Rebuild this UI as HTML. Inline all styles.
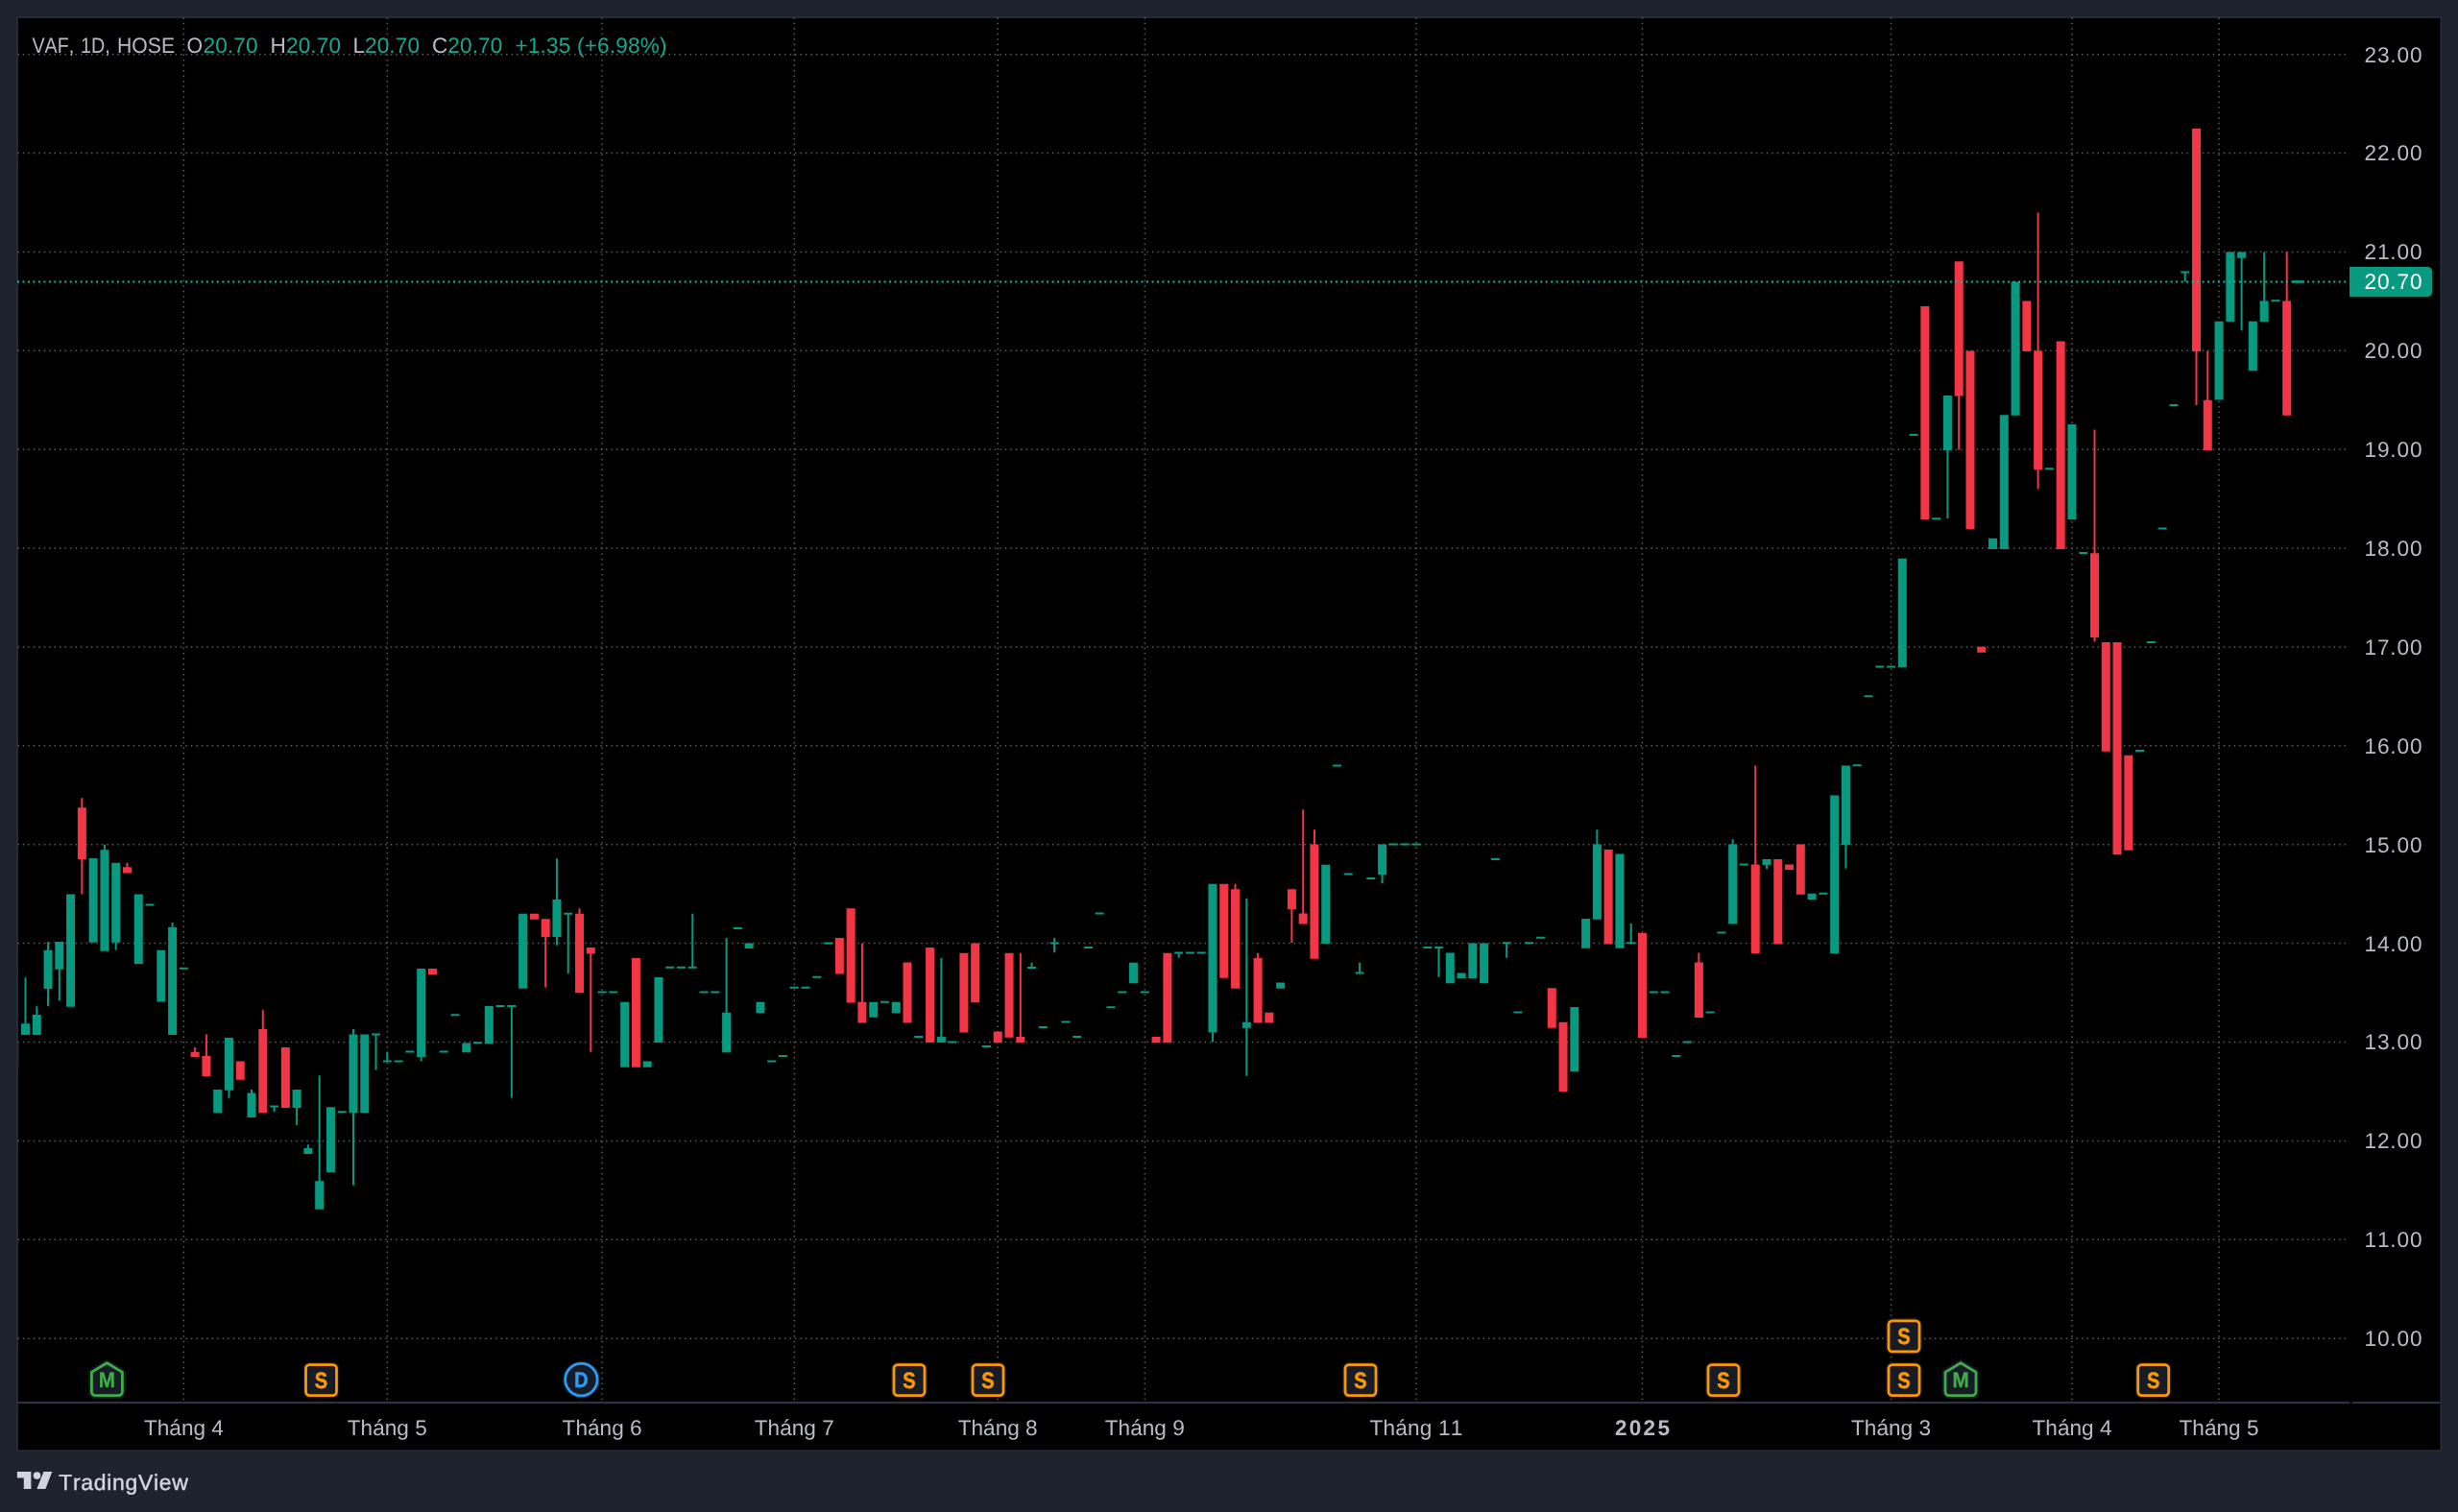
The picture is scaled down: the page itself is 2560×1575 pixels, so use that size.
<!DOCTYPE html>
<html><head><meta charset="utf-8"><title>VAF</title>
<style>
html,body{margin:0;padding:0;background:#1e222d;}
body{width:2560px;height:1575px;overflow:hidden;font-family:"Liberation Sans",sans-serif;}
svg{display:block;will-change:transform;}
text{font-kerning:none;text-rendering:geometricPrecision;}
</style></head><body>
<svg width="2560" height="1575" viewBox="0 0 2560 1575">
<defs><clipPath id="cc"><rect x="19" y="19" width="2428" height="1441"/></clipPath></defs>
<rect x="17" y="17" width="2526" height="1495" rx="3" fill="#262a36"/>
<rect x="19" y="19" width="2522.3" height="1491.3" fill="#000"/>
<g stroke="#5c5d62" stroke-width="1.5" stroke-dasharray="1.5 3.97" fill="none">
<path d="M18.35 1394.14H2444.5"/>
<path d="M18.35 1291.26H2444.5"/>
<path d="M18.35 1188.38H2444.5"/>
<path d="M18.35 1085.50H2444.5"/>
<path d="M18.35 982.62H2444.5"/>
<path d="M18.35 879.74H2444.5"/>
<path d="M18.35 776.86H2444.5"/>
<path d="M18.35 673.98H2444.5"/>
<path d="M18.35 571.10H2444.5"/>
<path d="M18.35 468.22H2444.5"/>
<path d="M18.35 365.34H2444.5"/>
<path d="M18.35 262.46H2444.5"/>
<path d="M18.35 159.58H2444.5"/>
<path d="M18.35 56.70H2444.5"/>
<path d="M191.36 18.25V1460"/>
<path d="M403.33 18.25V1460"/>
<path d="M627.08 18.25V1460"/>
<path d="M827.27 18.25V1460"/>
<path d="M1039.24 18.25V1460"/>
<path d="M1192.32 18.25V1460"/>
<path d="M1474.95 18.25V1460"/>
<path d="M1710.47 18.25V1460"/>
<path d="M1969.54 18.25V1460"/>
<path d="M2157.96 18.25V1460"/>
<path d="M2311.04 18.25V1460"/>
</g>
<g clip-path="url(#cc)">
<path fill="#089981" d="M10.22 1085.5h9v25.5h-9z M25.5 1018.15h2v59.88h-2z M22 1066.21h9v11.81h-9z M37.28 1048.29h2v29.74h-2z M33.78 1057.05h9v20.98h-9z M49.05 981.08h2v66.8h-2z M45.55 989.84h9v40.12h-9z M60.83 981.08h2v61.51h-2z M57.33 981.08h9v28.72h-9z M69.1 931.59h9v117.11h-9z M92.66 894.11h9v87.58h-9z M107.93 879.86h2v110.79h-2z M104.43 885.15h9v105.5h-9z M119.71 898.8h2v91.04h-2z M116.21 898.8h9v82.89h-9z M139.76 931.59h9v72.51h-9z M151.54 941.38h9v2h-9z M163.31 989.84h9v53.56h-9z M178.59 960.92h2v117.11h-2z M175.09 966.01h9v112.02h-9z M186.86 1007.78h9v2h-9z M222.19 1135.03h9v24.24h-9z M237.47 1081.06h2v62.73h-2z M233.97 1081.06h9v54.58h-9z M261.02 1135.03h2v28.92h-2z M257.52 1138.49h9v25.46h-9z M281.07 1151.55h9v2h-9z M284.57 1152.55h2v5.7h-2z M308.12 1135.03h2v37.07h-2z M304.62 1135.03h9v18.94h-9z M319.9 1192.26h2v9.78h-2z M316.4 1195.93h9v6.11h-9z M331.68 1120.37h2v139.31h-2z M328.18 1230.35h9v29.33h-9z M339.95 1153.16h9v67.82h-9z M351.73 1157.25h9v2h-9z M367 1071.89h2v162.93h-2z M363.5 1077.39h9v81.87h-9z M375.28 1077.39h9v81.87h-9z M387.06 1076.39h9v2h-9z M390.56 1077.39h2v37.47h-2z M398.83 1104.5h9v2h-9z M402.33 1095.72h2v9.78h-2z M410.61 1104.5h9v2h-9z M422.38 1094.52h9v2h-9z M437.66 1008.96h2v96.54h-2z M434.16 1008.96h9v92.06h-9z M457.71 1094.52h9v2h-9z M469.49 1056.23h9v2h-9z M481.26 1086.56h9v9.78h-9z M493.04 1085.35h9v2h-9z M504.82 1048.07h9v39.1h-9z M516.59 1046.98h9v2h-9z M528.37 1046.98h9v2h-9z M531.87 1047.98h2v95.52h-2z M540.14 951.65h9v78h-9z M578.97 894.22h2v90.63h-2z M575.47 936.99h9v38.9h-9z M587.25 950.65h9v2h-9z M590.75 951.65h2v62.53h-2z M622.58 1032.52h9v2h-9z M634.35 1032.52h9v2h-9z M646.13 1043.71h9v68.02h-9z M669.68 1105.62h9v6.11h-9z M681.46 1018.04h9v68.02h-9z M693.23 1006.86h9v2h-9z M705.01 1006.86h9v2h-9z M716.78 1006.86h9v2h-9z M720.28 951.65h2v56.21h-2z M728.56 1032.52h9v2h-9z M740.34 1032.52h9v2h-9z M755.61 977.11h2v119.14h-2z M752.11 1054.7h9v41.55h-9z M763.89 965.92h9v2h-9z M775.66 982.61h9v5.3h-9z M787.44 1043.71h9v11.61h-9z M799.22 1104.62h9v2h-9z M810.99 1099.12h9v2h-9z M822.77 1027.84h9v2h-9z M834.54 1027.84h9v2h-9z M846.32 1016.84h9v2h-9z M858.1 981.61h9v2h-9z M905.2 1043.71h9v16.09h-9z M916.98 1042.71h9v2h-9z M928.75 1043.71h9v11.61h-9z M952.3 1078.96h9v2h-9z M979.36 998.09h2v87.98h-2z M975.86 1079.96h9v6.11h-9z M987.63 1084.46h9v2h-9z M1022.96 1089.08h9v2h-9z M1070.06 1007h9v2h-9z M1073.56 1002.71h2v5.3h-2z M1081.84 1068.92h9v2h-9z M1093.62 981.55h9v2h-9z M1097.12 977.05h2v15.27h-2z M1105.39 1063.42h9v2h-9z M1117.17 1078.9h9v2h-9z M1128.94 986.03h9v2h-9z M1140.72 950.59h9v2h-9z M1152.5 1048.14h9v2h-9z M1164.27 1032.46h9v2h-9z M1176.05 1002.71h9v21.59h-9z M1187.82 1032.46h9v2h-9z M1223.15 991.53h9v2h-9z M1226.65 992.53h2v5.09h-2z M1234.93 991.53h9v2h-9z M1246.7 991.53h9v2h-9z M1261.98 920.63h2v164.77h-2z M1258.48 920.63h9v154.79h-9z M1297.31 936.11h2v184.52h-2z M1293.81 1064.83h9v5.91h-9z M1329.14 1023.48h9v6.31h-9z M1376.24 900.67h9v82.28h-9z M1388.02 796.5h9v2h-9z M1399.79 909.45h9v2h-9z M1411.57 1012.5h9v2h-9z M1415.07 1002.71h2v10.79h-2z M1423.34 913.93h9v2h-9z M1438.62 879.49h2v40.73h-2z M1435.12 879.49h9v31.57h-9z M1446.9 878.49h9v2h-9z M1458.67 878.49h9v2h-9z M1470.45 878.49h9v2h-9z M1482.22 986.05h9v2h-9z M1494 986.05h9v2h-9z M1497.5 987.05h2v30.75h-2z M1505.78 992.55h9v31.77h-9z M1517.55 1013.52h9v5.5h-9z M1529.33 982.57h9v36.46h-9z M1541.1 982.57h9v41.75h-9z M1552.88 893.99h9v2h-9z M1564.66 981.36h9v2h-9z M1568.16 982.36h2v15.48h-2z M1576.43 1053.46h9v2h-9z M1588.21 981.36h9v2h-9z M1599.98 975.86h9v2h-9z M1635.31 1048.96h9v67.41h-9z M1647.09 957.11h9v30.75h-9z M1662.36 864.24h2v93.48h-2z M1658.86 879.51h9v78.21h-9z M1682.42 889.49h9v98.37h-9z M1694.19 981.36h9v2h-9z M1697.69 961.79h2v20.57h-2z M1717.74 1032.48h9v2h-9z M1729.52 1032.48h9v2h-9z M1741.3 1098.88h9v2h-9z M1753.07 1084.42h9v2h-9z M1776.62 1053.46h9v2h-9z M1788.4 970.57h9v2h-9z M1803.68 874.22h2v88.19h-2z M1800.18 879.51h9v82.89h-9z M1811.95 899.49h9v2h-9z M1839 894.99h2v9.98h-2z M1835.5 894.99h9v6.11h-9z M1882.61 930.84h9v6.11h-9z M1894.38 929.63h9v2h-9z M1906.16 828.59h9v164.77h-9z M1921.44 797.43h2v107.33h-2z M1917.94 797.43h9v82.89h-9z M1929.71 796.23h9v2h-9z M1941.49 724.34h9v2h-9z M1953.26 693.38h9v2h-9z M1965.04 693.38h9v2h-9z M1976.82 581.63h9v113.36h-9z M1988.59 451.91h9v2h-9z M2012.14 539.29h9v2h-9z M2027.42 411.98h2v128.31h-2z M2023.92 411.98h9v57.03h-9z M2071.02 560.65h9v11.41h-9z M2082.8 432.14h9v139.92h-9z M2094.58 293.5h9v139.25h-9z M2129.9 487.35h9v2h-9z M2153.46 442.12h9v98.98h-9z M2165.23 574.93h9v2h-9z M2224.11 780.96h9v2h-9z M2235.89 667.92h9v2h-9z M2247.66 549.47h9v2h-9z M2259.44 420.96h9v2h-9z M2271.22 282.52h9v2h-9z M2274.72 283.52h2v9.98h-2z M2306.54 334.64h9v81.87h-9z M2318.32 262.55h9v72.51h-9z M2333.6 262.55h2v81.67h-2z M2330.1 262.55h9v6.11h-9z M2341.87 334.64h9v51.73h-9z M2357.15 262.55h2v72.51h-2z M2353.65 313.46h9v21.59h-9z M2365.42 312.26h9v2h-9z M2387.28 292.5h12.5v2h-12.5z"/>
<path fill="#f23645" d="M84.38 831.18h2v100.41h-2z M80.88 841.16h9v53.77h-9z M131.48 898.8h2v10.79h-2z M127.98 903.28h9v6.31h-9z M202.14 1091.04h2v9.98h-2z M198.64 1095.72h9v5.3h-9z M213.92 1077.39h2v43.58h-2z M210.42 1100h9v20.98h-9z M245.74 1105.5h9v19.35h-9z M272.8 1052.14h2v107.13h-2z M269.3 1071.89h9v87.37h-9z M292.85 1091.04h9v62.93h-9z M445.94 1008.96h9v6.31h-9z M551.92 951.65h9v6.11h-9z M567.2 957.15h2v71.69h-2z M563.7 957.15h9v18.74h-9z M602.52 946.15h2v88.19h-2z M599.02 951.65h9v82.69h-9z M614.3 987.09h2v108.55h-2z M610.8 987.09h9v6.31h-9z M657.9 998.09h9v113.65h-9z M869.87 977.11h9v37.27h-9z M881.65 946.15h9v98.37h-9z M896.92 982.61h2v82.89h-2z M893.42 1043.71h9v21.79h-9z M940.53 1002.57h9v62.93h-9z M964.08 987.09h9v98.98h-9z M999.41 992.73h9v82.69h-9z M1011.18 982.55h9v61.71h-9z M1034.74 1074.6h9v11.61h-9z M1046.51 992.73h9v87.98h-9z M1061.79 992.73h2v93.48h-2z M1058.29 1080.1h9v6.11h-9z M1199.6 1080.1h9v6.11h-9z M1211.38 992.73h9v93.48h-9z M1270.26 920.63h9v98.17h-9z M1285.53 920.63h2v109.16h-2z M1282.03 926.13h9v103.67h-9z M1309.08 992.73h2v72.71h-2z M1305.58 998.02h9v67.41h-9z M1317.36 1054.64h9v10.79h-9z M1344.41 926.13h2v56.21h-2z M1340.91 926.13h9v20.77h-9z M1356.19 843.24h2v119.35h-2z M1352.69 951.59h9v11h-9z M1367.96 864.22h2v134.62h-2z M1364.46 879.49h9v119.35h-9z M1611.76 1029.21h9v41.55h-9z M1623.54 1064.64h9v72.71h-9z M1670.64 885.01h9v98.57h-9z M1705.97 971.77h9v109.16h-9z M1768.35 992.55h2v67.41h-2z M1764.85 1002.53h9v57.43h-9z M1827.23 797.43h2v195.93h-2z M1823.73 900.49h9v92.87h-9z M1847.28 894.99h9v88.59h-9z M1859.06 900.49h9v5.5h-9z M1870.83 879.51h9v52.14h-9z M2000.37 318.96h9v222.14h-9z M2039.2 272.32h2v196.07h-2z M2035.7 272.32h9v140.26h-9z M2047.47 365.4h9v185.68h-9z M2059.25 673.69h9v6.11h-9z M2106.35 313.46h9v52.55h-9z M2121.63 221.41h2v287.92h-2z M2118.13 365.4h9v123.97h-9z M2141.68 355.42h9v216.64h-9z M2180.51 447.62h2v220.98h-2z M2177.01 576.13h9v87.98h-9z M2188.78 669h9v113.77h-9z M2200.56 669h9v221.3h-9z M2212.34 786.64h9v99.19h-9z M2286.49 134.03h2v287.92h-2z M2282.99 134.03h9v231.98h-9z M2298.27 365.4h2v103.6h-2z M2294.77 416.66h9v52.34h-9z M2380.7 262.55h2v170.2h-2z M2377.2 313.46h9v119.29h-9z"/>
</g>
<path d="M18 293.5H2446" stroke="#0bbfa3" stroke-width="2" stroke-dasharray="2 3.47" fill="none"/>
<rect x="2386.9" y="292.4" width="12.5" height="2.2" fill="#089981"/>
<rect x="19" y="1460" width="2428.2" height="2.2" fill="#2d3140"/>
<rect x="2449.3" y="1460" width="92" height="2.2" fill="#2d3140"/>
<g font-family="Liberation Sans, sans-serif" font-size="22.6" fill="#b9bcc6" text-anchor="start">
<text x="2462.5" y="1402.04" textLength="60" lengthAdjust="spacing">10.00</text>
<text x="2462.5" y="1299.16" textLength="60" lengthAdjust="spacing">11.00</text>
<text x="2462.5" y="1196.28" textLength="60" lengthAdjust="spacing">12.00</text>
<text x="2462.5" y="1093.40" textLength="60" lengthAdjust="spacing">13.00</text>
<text x="2462.5" y="990.52" textLength="60" lengthAdjust="spacing">14.00</text>
<text x="2462.5" y="887.64" textLength="60" lengthAdjust="spacing">15.00</text>
<text x="2462.5" y="784.76" textLength="60" lengthAdjust="spacing">16.00</text>
<text x="2462.5" y="681.88" textLength="60" lengthAdjust="spacing">17.00</text>
<text x="2462.5" y="579.00" textLength="60" lengthAdjust="spacing">18.00</text>
<text x="2462.5" y="476.12" textLength="60" lengthAdjust="spacing">19.00</text>
<text x="2462.5" y="373.24" textLength="60" lengthAdjust="spacing">20.00</text>
<text x="2462.5" y="270.36" textLength="60" lengthAdjust="spacing">21.00</text>
<text x="2462.5" y="167.48" textLength="60" lengthAdjust="spacing">22.00</text>
<text x="2462.5" y="64.60" textLength="60" lengthAdjust="spacing">23.00</text>
</g>
<path d="M2447 278h81.5a4.5 4.5 0 0 1 4.5 4.5v22a4.5 4.5 0 0 1 -4.5 4.5H2447z" fill="#089981"/>
<text x="2462.5" y="301.4" font-family="Liberation Sans, sans-serif" font-size="22.6" fill="#fff" textLength="60" lengthAdjust="spacing">20.70</text>
<g font-family="Liberation Sans, sans-serif" font-size="22.6" fill="#b9bcc6" text-anchor="middle">
<text x="191.4" y="1495.2" textLength="83" lengthAdjust="spacing">Tháng 4</text>
<text x="403.3" y="1495.2" textLength="83" lengthAdjust="spacing">Tháng 5</text>
<text x="627.1" y="1495.2" textLength="83" lengthAdjust="spacing">Tháng 6</text>
<text x="827.3" y="1495.2" textLength="83" lengthAdjust="spacing">Tháng 7</text>
<text x="1039.2" y="1495.2" textLength="83" lengthAdjust="spacing">Tháng 8</text>
<text x="1192.3" y="1495.2" textLength="83" lengthAdjust="spacing">Tháng 9</text>
<text x="1474.9" y="1495.2" textLength="97" lengthAdjust="spacing">Tháng 11</text>
<text x="1710.5" y="1495.2" font-weight="bold" textLength="57" lengthAdjust="spacing">2025</text>
<text x="1969.5" y="1495.2" textLength="83" lengthAdjust="spacing">Tháng 3</text>
<text x="2158.0" y="1495.2" textLength="83" lengthAdjust="spacing">Tháng 4</text>
<text x="2311.0" y="1495.2" textLength="83" lengthAdjust="spacing">Tháng 5</text>
</g>
<g font-family="Liberation Sans, sans-serif" font-size="22.6">
<text x="33.4" y="54.5" fill="#b9bcc6" textLength="43.9" lengthAdjust="spacingAndGlyphs">VAF,</text>
<text x="84.0" y="54.5" fill="#b9bcc6" textLength="30.7" lengthAdjust="spacingAndGlyphs">1D,</text>
<text x="122.0" y="54.5" fill="#b9bcc6" textLength="60" lengthAdjust="spacingAndGlyphs">HOSE</text>
<text x="194.4" y="54.5" fill="#b9bcc6" textLength="16.5" lengthAdjust="spacingAndGlyphs">O</text>
<text x="211.5" y="54.5" fill="#18a791" textLength="57" lengthAdjust="spacing">20.70</text>
<text x="281.5" y="54.5" fill="#b9bcc6" textLength="16" lengthAdjust="spacing">H</text>
<text x="298" y="54.5" fill="#18a791" textLength="57" lengthAdjust="spacing">20.70</text>
<text x="367.5" y="54.5" fill="#b9bcc6" textLength="12" lengthAdjust="spacing">L</text>
<text x="380" y="54.5" fill="#18a791" textLength="57" lengthAdjust="spacing">20.70</text>
<text x="450" y="54.5" fill="#b9bcc6" textLength="16" lengthAdjust="spacing">C</text>
<text x="466.3" y="54.5" fill="#18a791" textLength="57" lengthAdjust="spacing">20.70</text>
<text x="536.5" y="54.5" fill="#18a791" textLength="158" lengthAdjust="spacing">+1.35 (+6.98%)</text>
</g>
<path d="M111.4 1419.8L127.4 1429.3999999999999V1449.6a4 4 0 0 1 -4 4H99.4a4 4 0 0 1 -4 -4V1429.3999999999999z" fill="#171b26" stroke="#131722" stroke-width="7.2" stroke-linejoin="round"/>
<path d="M111.4 1419.8L127.4 1429.3999999999999V1449.6a4 4 0 0 1 -4 4H99.4a4 4 0 0 1 -4 -4V1429.3999999999999z" fill="#171b26" stroke="#3fae46" stroke-width="2.8" stroke-linejoin="round"/>
<text x="111.4" y="1444.6" font-family="Liberation Sans, sans-serif" font-weight="bold" font-size="22.4" fill="#3fae46" stroke="#3fae46" stroke-width="0.3" text-anchor="middle" textLength="17.2" lengthAdjust="spacingAndGlyphs">M</text>
<rect x="315.6" y="1418.6999999999998" width="37.8" height="37.8" rx="6.5" fill="#131722"/>
<rect x="318.5" y="1421.6" width="32" height="32" rx="4" fill="#171b26" stroke="#ff9800" stroke-width="2.8"/>
<text x="334.5" y="1446.1" font-family="Liberation Sans, sans-serif" font-weight="bold" font-size="23.5" fill="#ff9800" stroke="#ff9800" stroke-width="0.5" text-anchor="middle" textLength="13.4" lengthAdjust="spacingAndGlyphs">S</text>
<circle cx="605.4" cy="1437.1" r="19.6" fill="#131722"/>
<circle cx="605.4" cy="1437.1" r="16.7" fill="#171b26" stroke="#2a9df4" stroke-width="2.8"/>
<text x="605.4" y="1445.1999999999998" font-family="Liberation Sans, sans-serif" font-weight="bold" font-size="22.5" fill="#2a9df4" stroke="#2a9df4" stroke-width="0.4" text-anchor="middle" textLength="14.6" lengthAdjust="spacingAndGlyphs">D</text>
<rect x="928.1" y="1418.6999999999998" width="37.8" height="37.8" rx="6.5" fill="#131722"/>
<rect x="931.0" y="1421.6" width="32" height="32" rx="4" fill="#171b26" stroke="#ff9800" stroke-width="2.8"/>
<text x="947" y="1446.1" font-family="Liberation Sans, sans-serif" font-weight="bold" font-size="23.5" fill="#ff9800" stroke="#ff9800" stroke-width="0.5" text-anchor="middle" textLength="13.4" lengthAdjust="spacingAndGlyphs">S</text>
<rect x="1010.1" y="1418.6999999999998" width="37.8" height="37.8" rx="6.5" fill="#131722"/>
<rect x="1013.0" y="1421.6" width="32" height="32" rx="4" fill="#171b26" stroke="#ff9800" stroke-width="2.8"/>
<text x="1029" y="1446.1" font-family="Liberation Sans, sans-serif" font-weight="bold" font-size="23.5" fill="#ff9800" stroke="#ff9800" stroke-width="0.5" text-anchor="middle" textLength="13.4" lengthAdjust="spacingAndGlyphs">S</text>
<rect x="1398.1" y="1418.6999999999998" width="37.8" height="37.8" rx="6.5" fill="#131722"/>
<rect x="1401.0" y="1421.6" width="32" height="32" rx="4" fill="#171b26" stroke="#ff9800" stroke-width="2.8"/>
<text x="1417" y="1446.1" font-family="Liberation Sans, sans-serif" font-weight="bold" font-size="23.5" fill="#ff9800" stroke="#ff9800" stroke-width="0.5" text-anchor="middle" textLength="13.4" lengthAdjust="spacingAndGlyphs">S</text>
<rect x="1776.1" y="1418.6999999999998" width="37.8" height="37.8" rx="6.5" fill="#131722"/>
<rect x="1779.0" y="1421.6" width="32" height="32" rx="4" fill="#171b26" stroke="#ff9800" stroke-width="2.8"/>
<text x="1795" y="1446.1" font-family="Liberation Sans, sans-serif" font-weight="bold" font-size="23.5" fill="#ff9800" stroke="#ff9800" stroke-width="0.5" text-anchor="middle" textLength="13.4" lengthAdjust="spacingAndGlyphs">S</text>
<rect x="1964.1" y="1418.6999999999998" width="37.8" height="37.8" rx="6.5" fill="#131722"/>
<rect x="1967.0" y="1421.6" width="32" height="32" rx="4" fill="#171b26" stroke="#ff9800" stroke-width="2.8"/>
<text x="1983" y="1446.1" font-family="Liberation Sans, sans-serif" font-weight="bold" font-size="23.5" fill="#ff9800" stroke="#ff9800" stroke-width="0.5" text-anchor="middle" textLength="13.4" lengthAdjust="spacingAndGlyphs">S</text>
<rect x="1964.1" y="1372.9999999999998" width="37.8" height="37.8" rx="6.5" fill="#131722"/>
<rect x="1967.0" y="1375.8999999999999" width="32" height="32" rx="4" fill="#171b26" stroke="#ff9800" stroke-width="2.8"/>
<text x="1983" y="1400.3999999999999" font-family="Liberation Sans, sans-serif" font-weight="bold" font-size="23.5" fill="#ff9800" stroke="#ff9800" stroke-width="0.5" text-anchor="middle" textLength="13.4" lengthAdjust="spacingAndGlyphs">S</text>
<path d="M2042 1419.8L2058 1429.3999999999999V1449.6a4 4 0 0 1 -4 4H2030a4 4 0 0 1 -4 -4V1429.3999999999999z" fill="#171b26" stroke="#131722" stroke-width="7.2" stroke-linejoin="round"/>
<path d="M2042 1419.8L2058 1429.3999999999999V1449.6a4 4 0 0 1 -4 4H2030a4 4 0 0 1 -4 -4V1429.3999999999999z" fill="#171b26" stroke="#3fae46" stroke-width="2.8" stroke-linejoin="round"/>
<text x="2042" y="1444.6" font-family="Liberation Sans, sans-serif" font-weight="bold" font-size="22.4" fill="#3fae46" stroke="#3fae46" stroke-width="0.3" text-anchor="middle" textLength="17.2" lengthAdjust="spacingAndGlyphs">M</text>
<rect x="2223.7999999999997" y="1418.6999999999998" width="37.8" height="37.8" rx="6.5" fill="#131722"/>
<rect x="2226.7" y="1421.6" width="32" height="32" rx="4" fill="#171b26" stroke="#ff9800" stroke-width="2.8"/>
<text x="2242.7" y="1446.1" font-family="Liberation Sans, sans-serif" font-weight="bold" font-size="23.5" fill="#ff9800" stroke="#ff9800" stroke-width="0.5" text-anchor="middle" textLength="13.4" lengthAdjust="spacingAndGlyphs">S</text>
<g fill="#d1d4dc">
<path d="M17.9 1533H32.4V1550.9H24.8V1539.6H17.9z"/>
<circle cx="38.5" cy="1537.1" r="3.85"/>
<path d="M45.4 1533H54.3L47.4 1550.9H38.4z"/>
</g>
<text x="61.2" y="1551.8" font-family="Liberation Sans, sans-serif" font-size="23" fill="#d6d8e0" textLength="134.6" lengthAdjust="spacing" stroke="#d1d4dc" stroke-width="0.4">TradingView</text>
</svg>
</body></html>
